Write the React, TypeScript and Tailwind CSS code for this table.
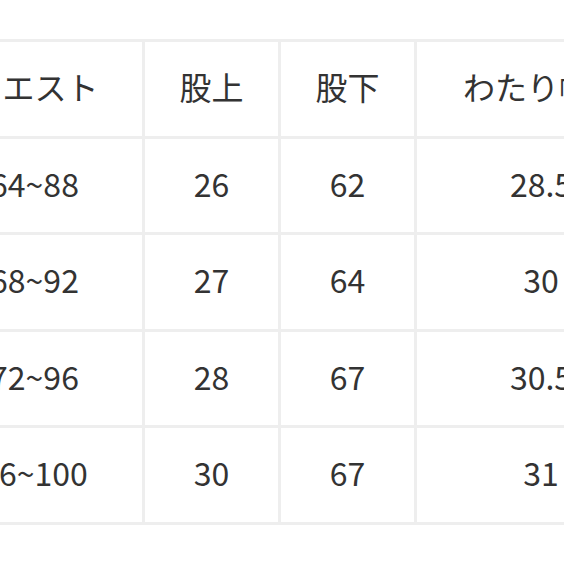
const headers = ['ウエスト', '股上', '股下', 'わたり幅'];

const rows = [
  ['64~88', '26', '62', '28.5'],
  ['68~92', '27', '64', '30'],
  ['72~96', '28', '67', '30.5'],
  ['76~100', '30', '67', '31'],
];

function Cell({ children }: { children: React.ReactNode }) {
  return (
    <div className="bg-white h-[93.5px] pb-[5px] flex items-center justify-center">
      {children}
    </div>
  );
}

export default function App() {
  return (
    <div
      className="w-[564px] h-[564px] overflow-hidden bg-white text-[#333] text-[32px] leading-none"
      style={{ fontFamily: '"Noto Sans CJK JP", "Noto Sans", sans-serif' }}
    >
      <div className="mt-[39px] -ml-[76px] w-max">
        <div className="grid grid-cols-[215px_133px_133px_248px] gap-[3px] p-[3px] bg-[#eeeeee]">
          <Cell>{headers[0]}</Cell>
          <Cell>{headers[1]}</Cell>
          <Cell>{headers[2]}</Cell>
          <div className="bg-white h-[93.5px] pb-[5px] pr-[28px] flex items-center justify-center">{headers[3]}</div>
          {rows.map((r, i) => (
            <div key={i} className="contents">
              {r.map((v, j) => (
                <Cell key={j}>{v}</Cell>
              ))}
            </div>
          ))}
        </div>
      </div>
    </div>
  );
}
